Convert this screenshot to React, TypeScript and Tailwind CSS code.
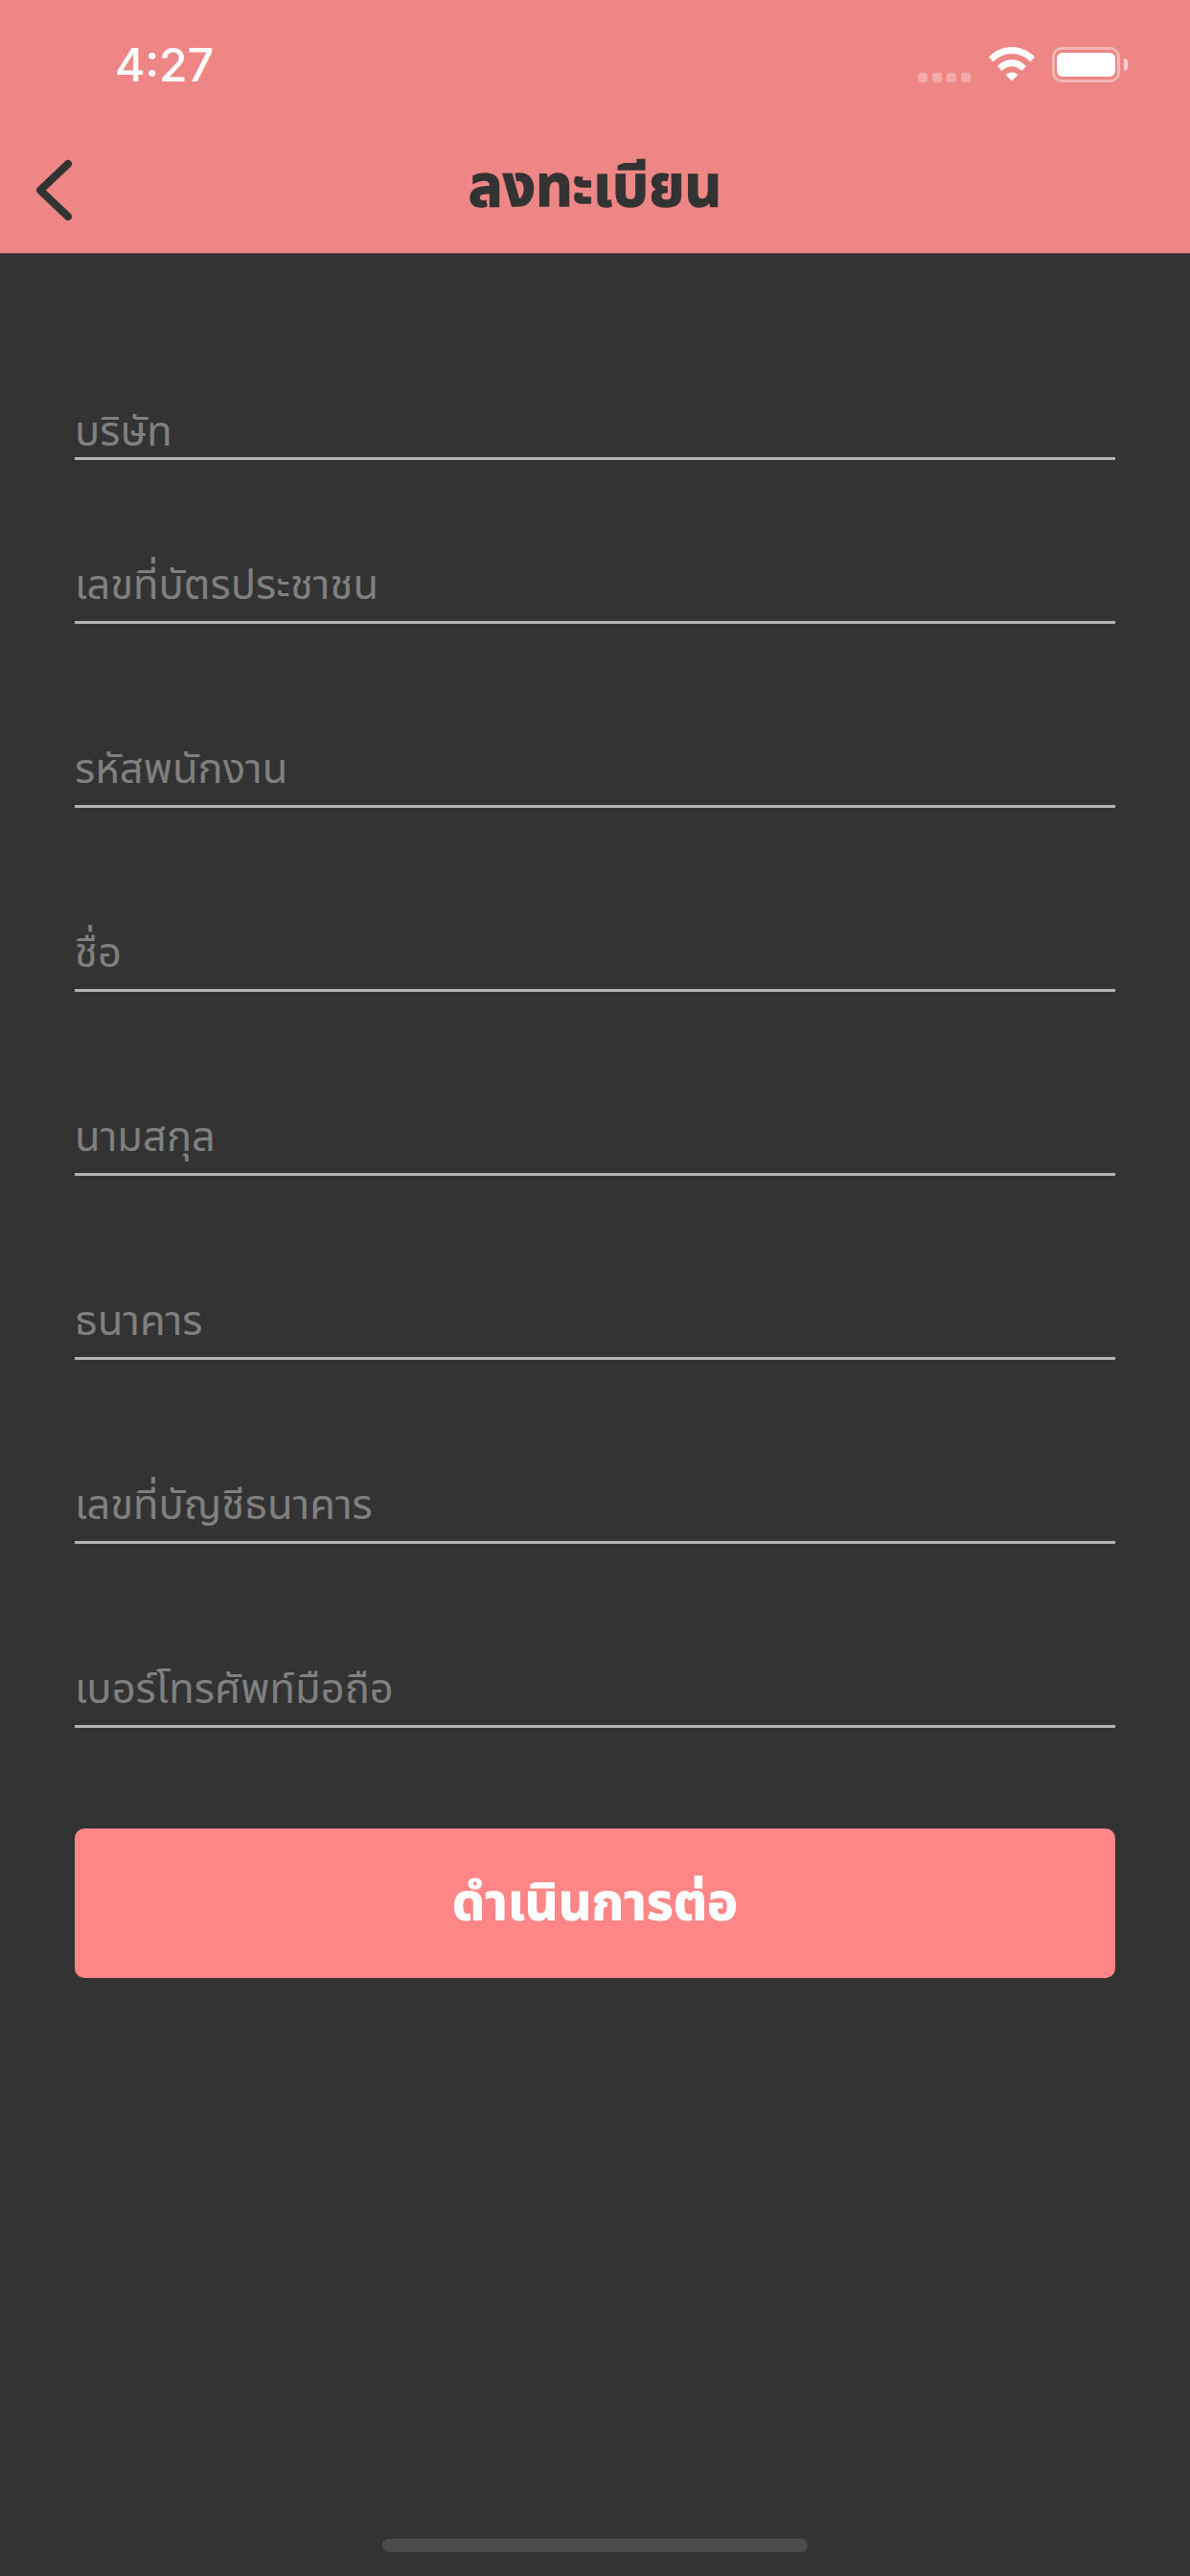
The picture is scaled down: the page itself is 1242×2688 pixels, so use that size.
const fields = [
  { label: "บริษัท", h: "h-[102px]", pb: "pb-[0px] leading-[50px]" },
  { label: "เลขที่บัตรประชาชน", h: "h-[171px]", pb: "pb-[8px] leading-[56px]" },
  { label: "รหัสพนักงาน", h: "h-[192px]", pb: "pb-[8px] leading-[56px]" },
  { label: "ชื่อ", h: "h-[192px]", pb: "pb-[8px] leading-[56px]" },
  { label: "นามสกุล", h: "h-[192px]", pb: "pb-[8px] leading-[56px]" },
  { label: "ธนาคาร", h: "h-[192px]", pb: "pb-[8px] leading-[56px]" },
  { label: "เลขที่บัญชีธนาคาร", h: "h-[192px]", pb: "pb-[8px] leading-[56px]" },
  { label: "เบอร์โทรศัพท์มือถือ", h: "h-[192px]", pb: "pb-[8px] leading-[56px]" },
];

const thai = "font-['Noto_Sans_Thai','Noto_Sans','Liberation_Sans',sans-serif]";

export default function App() {
  return (
    <div className={`relative flex h-[2688px] w-[1242px] flex-col overflow-hidden bg-[#333333] ${thai}`}>
      <header className="flex h-[265px] shrink-0 flex-col border-b-[1px] border-[#5a5050] bg-[#ee8686]">
        <div className="flex h-[132px] items-start justify-between pl-[120px] pr-[65px] pt-[41px]">
          <span className="font-['Inter',sans-serif] text-[48px] font-medium leading-[54px] text-white">4:27</span>
          <div className="flex items-center pt-[7px]">
            <div className="mr-[19px] mt-[28px] flex gap-[5px]">
              <span className="h-[10px] w-[10px] rounded-[3px] bg-white/30" />
              <span className="h-[10px] w-[10px] rounded-[3px] bg-white/30" />
              <span className="h-[10px] w-[10px] rounded-[3px] bg-white/30" />
              <span className="h-[10px] w-[10px] rounded-[3px] bg-white/30" />
            </div>
            <svg width="48" height="36" viewBox="0 0 48 36" className="mr-[18px]">
              <path d="M0 10.5 C13 -3.5 35 -3.5 48 10.5 L43.5 15.5 C32 4 16 4 4.5 15.5 Z" fill="#fff" />
              <path d="M9 20 C17 11 31 11 39 20 L34.5 25 C28 18.5 20 18.5 13.5 25 Z" fill="#fff" />
              <path d="M17.5 29 C21 25.5 27 25.5 30.5 29 L24 35.5 Z" fill="#fff" />
            </svg>
            <div className="flex items-center">
              <div className="flex h-[37px] w-[71px] items-center justify-center rounded-[10px] border-[3px] border-white/40">
                <div className="h-[25px] w-[61px] rounded-[6px] bg-white" />
              </div>
              <div className="ml-[4px] h-[13px] w-[4px] rounded-r-full bg-white/60" />
            </div>
          </div>
        </div>
        <div className="relative flex flex-1 items-center justify-center pb-[3px]">
          <svg width="40" height="66" viewBox="0 0 40 66" fill="none" className="absolute left-[37px] top-[33px]">
            <path d="M34 6 L5 33.5 L34 61" stroke="#333333" strokeWidth="8" strokeLinecap="round" strokeLinejoin="round" />
          </svg>
          <h1 className="text-[60px] font-bold leading-none text-[#333333] [-webkit-text-stroke:1.5px_#333333]">ลงทะเบียน</h1>
        </div>
      </header>

      <main className="flex flex-col px-[78px] pt-[113px]">
        {fields.map((f) => (
          <div key={f.label} className={`flex ${f.h} items-end border-b-[3px] border-[#b3b3b3]`}>
            <span className={`${f.pb} text-[43.5px] text-[#808080]`}>{f.label}</span>
          </div>
        ))}
        <button className="mt-[105px] flex h-[156px] w-full items-center justify-center rounded-[10px] bg-[#ff8686] text-[54px] font-bold text-white [-webkit-text-stroke:1px_#ffffff]">
          ดำเนินการต่อ
        </button>
      </main>

      <div className="absolute bottom-[25px] left-[399px] h-[14px] w-[444px] rounded-full bg-[#4c4c4c]" />
    </div>
  );
}
